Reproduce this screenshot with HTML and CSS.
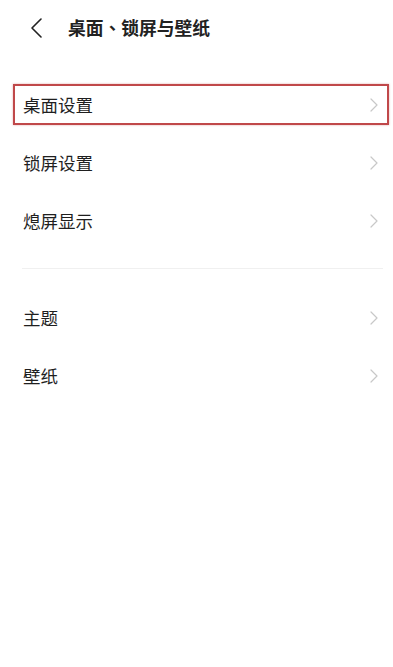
FILE: index.html
```html
<!DOCTYPE html>
<html lang="zh-CN">
<head>
<meta charset="utf-8">
<meta name="viewport" content="width=device-width, initial-scale=1">
<title>桌面、锁屏与壁纸</title>
<link rel="stylesheet" href="styles.css">
</head>
<body>
<header class="topbar">
  <svg class="back" width="12" height="20" viewBox="0 0 12 20"><path d="M11 1 L2 10 L11 19" fill="none" stroke="#222" stroke-width="1.6" stroke-linecap="round" stroke-linejoin="round"/></svg>
  <h1 class="title">桌面<span class="punct" lang="zh-TW">、</span>锁屏与壁纸</h1>
</header>
<main class="list">
  <div class="row row-marked">
    <span class="label">桌面设置</span>
    <svg class="chev" width="8" height="14" viewBox="0 0 8 14"><path d="M1 1 L7 7 L1 13" fill="none" stroke="#c8c8c8" stroke-width="1.2" stroke-linecap="round" stroke-linejoin="round"/></svg>
    <span class="mark"></span>
  </div>
  <div class="row">
    <span class="label">锁屏设置</span>
    <svg class="chev" width="8" height="14" viewBox="0 0 8 14"><path d="M1 1 L7 7 L1 13" fill="none" stroke="#c8c8c8" stroke-width="1.2" stroke-linecap="round" stroke-linejoin="round"/></svg>
  </div>
  <div class="row">
    <span class="label">熄屏显示</span>
    <svg class="chev" width="8" height="14" viewBox="0 0 8 14"><path d="M1 1 L7 7 L1 13" fill="none" stroke="#c8c8c8" stroke-width="1.2" stroke-linecap="round" stroke-linejoin="round"/></svg>
  </div>
  <div class="divider"></div>
  <div class="row">
    <span class="label">主题</span>
    <svg class="chev" width="8" height="14" viewBox="0 0 8 14"><path d="M1 1 L7 7 L1 13" fill="none" stroke="#c8c8c8" stroke-width="1.2" stroke-linecap="round" stroke-linejoin="round"/></svg>
  </div>
  <div class="row">
    <span class="label">壁纸</span>
    <svg class="chev" width="8" height="14" viewBox="0 0 8 14"><path d="M1 1 L7 7 L1 13" fill="none" stroke="#c8c8c8" stroke-width="1.2" stroke-linecap="round" stroke-linejoin="round"/></svg>
  </div>
</main>
</body>
</html>
```
FILE: styles.css
```css
html, body {
  margin: 0;
  padding: 0;
  background: #ffffff;
}
body {
  width: 393px;
  min-height: 667px;
  font-family: "Noto Sans CJK SC", "Noto Sans", sans-serif;
  color: #222222;
}
.topbar {
  height: 56px;
  display: flex;
  align-items: center;
  padding-left: 30px;
  gap: 26px;
}
.back {
  display: block;
  flex: none;
}
.title {
  margin: 0;
  font-size: 17.75px;
  font-weight: 700;
  color: #222222;
  line-height: 1;
  padding-bottom: 1px;
}
.punct {
  font-family: "Noto Sans CJK TC", "Noto Sans CJK SC", sans-serif;
}
.list {
  padding-top: 20px;
  display: flex;
  flex-direction: column;
}
.row {
  position: relative;
  height: 58px;
  display: flex;
  align-items: center;
  justify-content: space-between;
  padding: 0 15px 0 23px;
}
.label {
  font-size: 17.5px;
  line-height: 1;
  color: #1f1f1f;
}
.chev {
  display: block;
  flex: none;
}
.mark {
  position: absolute;
  left: 13px;
  right: 4px;
  top: 8px;
  bottom: 9px;
  border: 2px solid #c0484a;
  box-shadow: 0 0 2px rgba(192, 72, 74, 0.45);
  pointer-events: none;
}
.divider {
  height: 1px;
  background: #f0f0f0;
  margin: 18px 10px 20px 22px;
}
```
